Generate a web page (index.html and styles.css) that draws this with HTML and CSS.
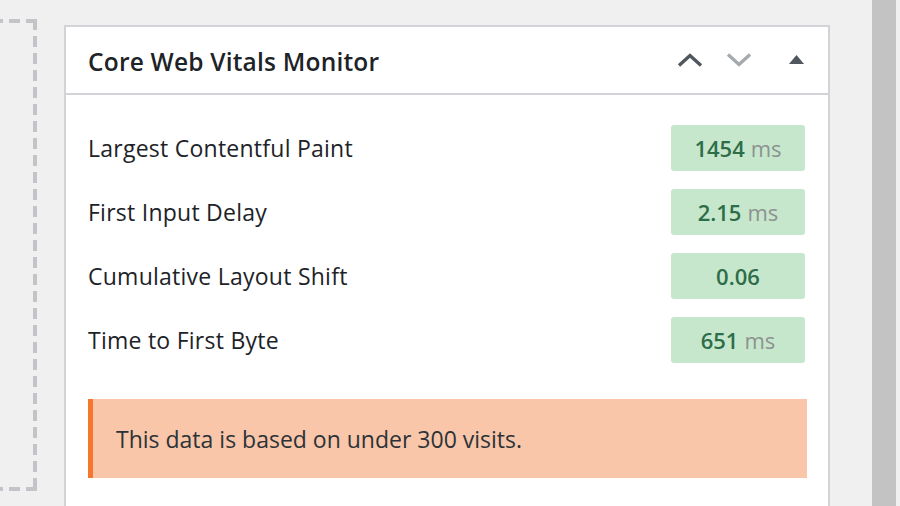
FILE: index.html
```html
<!DOCTYPE html>
<html lang="en">
<head>
<meta charset="utf-8">
<title>Core Web Vitals Monitor</title>
<link rel="stylesheet" href="styles.css">
</head>
<body>
<div class="page">
  <div class="drop-zone"></div>
  <section class="postbox">
    <header class="postbox-header">
      <h2 class="hndle">Core Web Vitals Monitor</h2>
      <div class="handle-actions">
        <button class="handle-btn up" aria-label="Move up">
          <svg width="26" height="14" viewBox="0 0 26 14"><path d="M2 12.5 L13 2.5 L24 12.5" fill="none" stroke="currentColor" stroke-width="3.4"/></svg>
        </button>
        <button class="handle-btn down" aria-label="Move down">
          <svg width="26" height="14" viewBox="0 0 26 14"><path d="M2 1.5 L13 11.5 L24 1.5" fill="none" stroke="currentColor" stroke-width="3.4"/></svg>
        </button>
        <button class="handle-btn toggle" aria-label="Toggle panel">
          <svg width="15" height="9" viewBox="0 0 15 9"><path d="M7.5 0 L15 9 L0 9 Z" fill="currentColor"/></svg>
        </button>
      </div>
    </header>
    <div class="inside">
      <ul class="metrics">
        <li class="metric"><span class="metric-label">Largest Contentful Paint</span><span class="badge"><strong>1454</strong> <span class="unit">ms</span></span></li>
        <li class="metric"><span class="metric-label">First Input Delay</span><span class="badge"><strong>2.15</strong> <span class="unit">ms</span></span></li>
        <li class="metric"><span class="metric-label">Cumulative Layout Shift</span><span class="badge"><strong>0.06</strong></span></li>
        <li class="metric"><span class="metric-label">Time to First Byte</span><span class="badge"><strong>651</strong> <span class="unit">ms</span></span></li>
      </ul>
      <div class="notice">This data is based on under 300 visits.</div>
    </div>
  </section>
  <div class="gutter"></div>
  <div class="scrollbar"></div>
</div>
</body>
</html>
```

FILE: styles.css
```css
* { box-sizing: border-box; }
html, body { margin: 0; padding: 0; }
body {
  background: #f0f0f1;
  font-family: "Open Sans", "Noto Sans", sans-serif;
  color: #1d2327;
  width: 900px;
  height: 506px;
  overflow: hidden;
}
.page {
  display: flex;
  align-items: flex-start;
  height: 506px;
}
.drop-zone {
  flex: 0 0 37px;
  height: 472px;
  margin-top: 19px;
  background:
    repeating-linear-gradient(to left, #c3c4c7 0 11px, transparent 11px 17px) top left / 100% 4px no-repeat,
    repeating-linear-gradient(to bottom, #c3c4c7 0 11px, transparent 11px 17px) top right / 4px 100% no-repeat,
    repeating-linear-gradient(to left, #c3c4c7 0 11px, transparent 11px 17px) bottom left / 100% 4px no-repeat;
}
.postbox {
  flex: 0 0 766px;
  margin-left: 27px;
  margin-top: 25px;
  height: 500px;
  background: #fff;
  border: 2px solid #d2d3d6;
  border-bottom: none;
}
.postbox-header {
  display: flex;
  align-items: center;
  height: 68px;
  padding: 0 24px 0 22px;
  border-bottom: 2px solid #d2d3d6;
}
.hndle {
  flex: 1;
  margin: 0;
  font-size: 24.5px;
  font-weight: 600;
  letter-spacing: 0.2px;
  color: #1d2327;
  padding-top: 2px;
}
.handle-actions {
  display: flex;
  align-items: center;
}
.handle-btn {
  background: none;
  border: 0;
  padding: 0;
  display: flex;
  cursor: pointer;
}
.handle-btn.up { color: #50575e; }
.handle-btn.down { color: #a7aaad; margin-left: 23px; }
.handle-btn.toggle { color: #50575e; margin-left: 37px; margin-top: -2px; }
.inside {
  padding: 30px 23px 0 22px;
}
.metrics {
  list-style: none;
  margin: 0;
  padding: 0;
  display: flex;
  flex-direction: column;
  gap: 18px;
}
.metric {
  display: flex;
  align-items: center;
  justify-content: space-between;
  height: 46px;
}
.metric-label {
  font-size: 23px;
  letter-spacing: 0.25px;
  color: #1d2327;
}
.badge {
  width: 134px;
  height: 46px;
  display: flex;
  align-items: center;
  justify-content: center;
  gap: 6px;
  background: #c7e7cd;
  border-radius: 3px;
  font-size: 22px;
}
.badge strong {
  font-weight: 600;
  color: #2d6d48;
}
.unit {
  color: #8c9390;
}
.notice {
  margin-top: 36px;
  margin-right: -2px;
  height: 79px;
  display: flex;
  align-items: center;
  padding-left: 23px;
  background: #f9c6a9;
  border-left: 5px solid #f7762d;
  font-size: 23px;
  color: #2c3338;
}
.gutter {
  flex: 0 0 42px;
}
.scrollbar {
  flex: 0 0 24px;
  height: 506px;
  background: #c3c3c3;
}
```
